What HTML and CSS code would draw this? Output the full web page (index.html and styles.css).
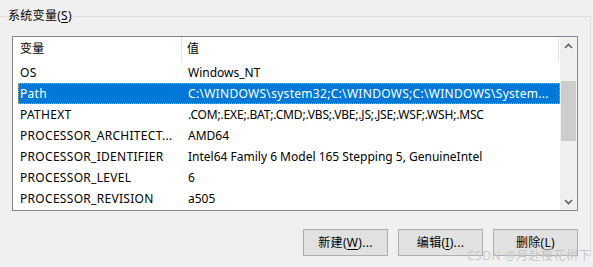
FILE: index.html
```html
<!DOCTYPE html>
<html lang="zh-CN">
<head>
<meta charset="utf-8">
<title>系统变量</title>
<link rel="stylesheet" href="styles.css">
</head>
<body>
<fieldset class="group">
  <legend class="group-label">系统变量(<u>S</u>)</legend>
  <div class="listview">
    <div class="list">
      <div class="header">
        <div class="hcell col1">变量</div>
        <div class="hcell col2">值</div>
      </div>
      <div class="row"><div class="cell c1">OS</div><div class="cell c2">Windows_NT</div></div>
      <div class="row selected"><div class="cell c1">Path</div><div class="cell c2 wide">C:\WINDOWS\system32;C:\WINDOWS;C:\WINDOWS\System...</div></div>
      <div class="row"><div class="cell c1">PATHEXT</div><div class="cell c2 tight">.COM;.EXE;.BAT;.CMD;.VBS;.VBE;.JS;.JSE;.WSF;.WSH;.MSC</div></div>
      <div class="row"><div class="cell c1">PROCESSOR_ARCHITECT...</div><div class="cell c2">AMD64</div></div>
      <div class="row"><div class="cell c1">PROCESSOR_IDENTIFIER</div><div class="cell c2">Intel64 Family 6 Model 165 Stepping 5, GenuineIntel</div></div>
      <div class="row"><div class="cell c1">PROCESSOR_LEVEL</div><div class="cell c2">6</div></div>
      <div class="row"><div class="cell c1">PROCESSOR_REVISION</div><div class="cell c2">a505</div></div>
    </div>
    <div class="scrollbar">
      <div class="sb-btn">
        <svg width="9" height="6" viewBox="0 0 9 6"><path d="M1 5 L4.5 1.5 L8 5" fill="none" stroke="#606060" stroke-width="1.6"/></svg>
      </div>
      <div class="sb-track"><div class="sb-thumb"></div></div>
      <div class="sb-btn">
        <svg width="9" height="6" viewBox="0 0 9 6"><path d="M1 1 L4.5 4.5 L8 1" fill="none" stroke="#606060" stroke-width="1.6"/></svg>
      </div>
    </div>
  </div>
  <div class="buttons">
    <button class="btn">新建(<u>W</u>)...</button>
    <button class="btn">编辑(<u>I</u>)...</button>
    <button class="btn">删除(<u>L</u>)</button>
  </div>
</fieldset>
<div class="watermark">CSDN @月赴樱花树下</div>
</body>
</html>
```

FILE: styles.css
```css
* { box-sizing: border-box; }
html, body {
  margin: 0;
  padding: 0;
}
body {
  width: 593px;
  height: 267px;
  overflow: hidden;
  position: relative;
  background: #f0f0f0;
  font-family: "Noto Sans", "Noto Sans CJK SC", sans-serif;
  font-size: 12px;
  letter-spacing: 0.3px;
  color: #000;
}
.group {
  margin: 6px 0 0 0;
  width: 591px;
  border: 1px solid #dcdcdc;
  border-left: 0;
  border-bottom: 0;
  padding: 0 12px 0 12px;
  min-width: 0;
}
.group-label {
  margin-left: -5px;
  padding: 0 1px;
  line-height: 20px;
  height: 20px;
}
.group-label u, .btn u { text-decoration-thickness: 1px; text-underline-offset: 2px; }
.listview {
  margin-top: 10px;
  width: 566px;
  height: 175px;
  border: 1px solid #828790;
  background: #fff;
  display: flex;
}
.list {
  flex: 1;
  min-width: 0;
}
.header {
  display: flex;
  height: 25px;
}
.hcell {
  height: 25px;
  line-height: 24px;
  border-right: 1px solid #e5e5e5;
}
.header .col1 { width: 169px; padding-left: 7px; }
.header .col2 { width: 377px; padding-left: 5px; }
.row {
  display: flex;
  height: 21px;
  line-height: 21px;
  margin-left: 5px;
  white-space: nowrap;
}
.row.selected {
  background: #0078d7;
  color: #fff;
  outline: 1px dotted #f59a3d;
  outline-offset: -1px;
}
.cell { overflow: hidden; }
.c1 { width: 164px; padding-left: 2px; }
.c2 { flex: 1; padding-left: 6px; letter-spacing: 0; }
.c2.wide { letter-spacing: 0.3px; }
.c2.tight { letter-spacing: -0.18px; }
.scrollbar {
  width: 17px;
  background: #f0f0f0;
  display: flex;
  flex-direction: column;
}
.sb-btn {
  height: 17px;
  display: flex;
  align-items: center;
  justify-content: center;
}
.sb-track { flex: 1; padding: 27px 1px 0; }
.sb-thumb { height: 60px; background: #cdcdcd; }
.buttons {
  margin-top: 18px;
  display: flex;
  justify-content: flex-end;
  gap: 10px;
}
.btn {
  width: 85px;
  height: 27px;
  margin: 0;
  padding: 0;
  background: #e1e1e1;
  border: 1px solid #adadad;
  font-family: inherit;
  font-size: 12px;
  line-height: 14px;
  letter-spacing: 0.3px;
  color: #000;
}
.watermark {
  position: absolute;
  right: 2px;
  bottom: 5px;
  font-size: 12px;
  line-height: 12px;
  letter-spacing: 0.5px;
  color: rgba(150, 150, 150, 0.55);
  text-shadow: 0 0 1px rgba(255,255,255,0.8);
}
```
